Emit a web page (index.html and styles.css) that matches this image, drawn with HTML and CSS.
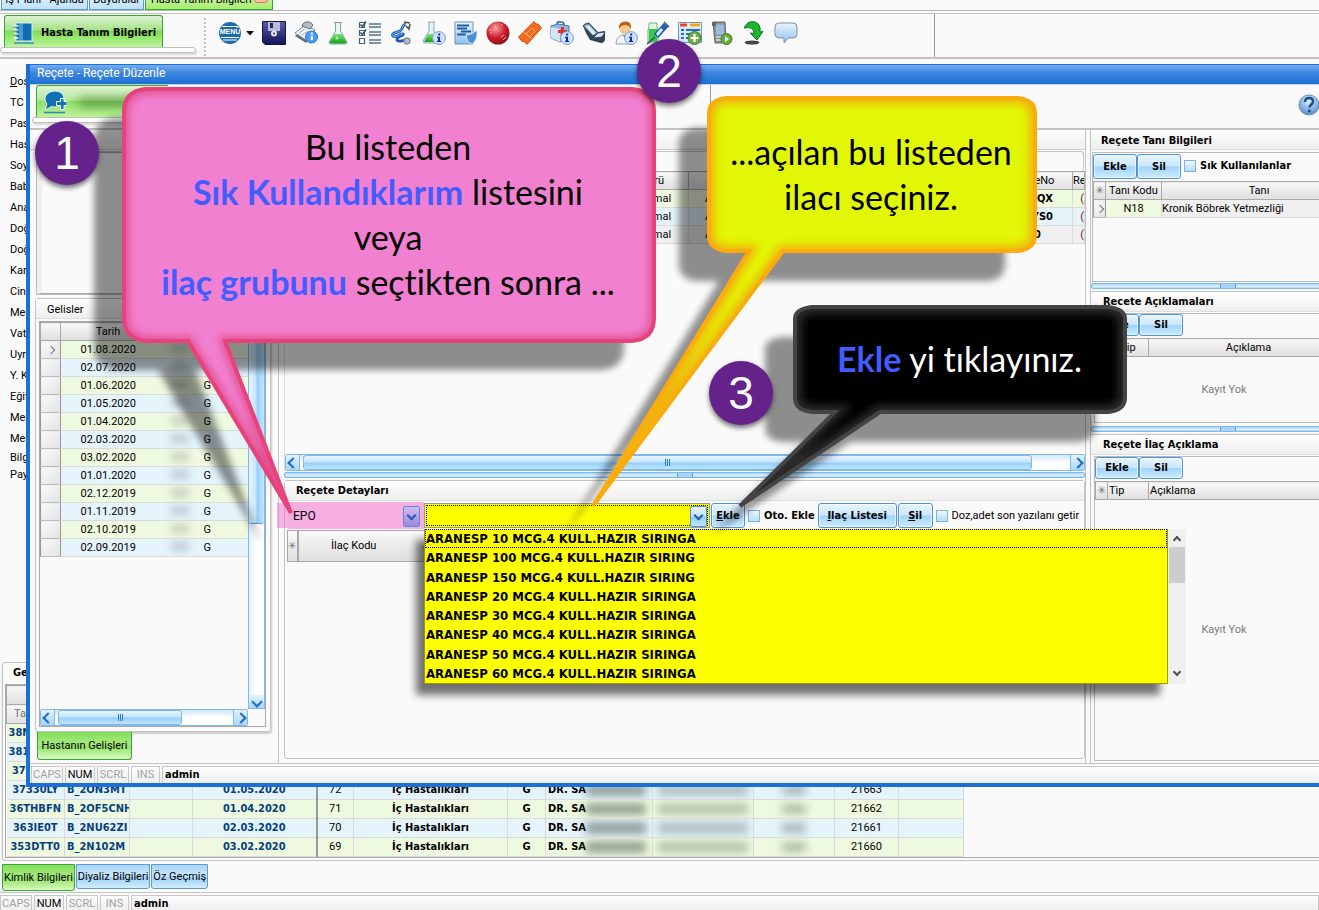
FILE: index.html
```html
<!DOCTYPE html>
<html lang="tr">
<head>
<meta charset="utf-8">
<title>Reçete Düzenle</title>
<link rel="stylesheet" href="styles.css">
</head>
<body>
<svg width="0" height="0" class="defs" aria-hidden="true">
  <defs>
    <linearGradient id="gBlue" x1="0" y1="0" x2="0" y2="1"><stop offset="0" stop-color="#eaf4fd"/><stop offset="1" stop-color="#8fc0ec"/></linearGradient>
    <linearGradient id="gGreen" x1="0" y1="0" x2="0" y2="1"><stop offset="0" stop-color="#7be07b"/><stop offset="1" stop-color="#18a018"/></linearGradient>
    <linearGradient id="gNavy" x1="0" y1="0" x2="0" y2="1"><stop offset="0" stop-color="#5a5aa8"/><stop offset="1" stop-color="#14145a"/></linearGradient>
    <radialGradient id="gRed" cx=".4" cy=".3" r=".8"><stop offset="0" stop-color="#f9a0a0"/><stop offset=".5" stop-color="#d02030"/><stop offset="1" stop-color="#7d0812"/></radialGradient>
    <radialGradient id="gHelp" cx=".5" cy=".3" r=".8"><stop offset="0" stop-color="#dcecfa"/><stop offset="1" stop-color="#3f83c6"/></radialGradient>
    <symbol id="info" viewBox="0 0 14 14"><circle cx="7" cy="7" r="6.4" fill="#cfe4fa" stroke="#7d9cc4"/><path d="M5 5.8h3v4h1v1.2H5V9.800h1V7H5zM6.200 2.500h2v2h-2z" fill="#1226c8"/></symbol>
  </defs>
</svg>

<div class="app">
  <nav class="top-tabs">
    <button class="ttab">İş Planı - Ajanda</button>
    <button class="ttab ttab-mid">Duyurular</button>
    <button class="ttab ttab-on">Hasta Tanım Bilgileri<i></i></button>
  </nav>

  <header class="toolbar">
    <div class="shelf-wrap">
      <button class="page-tab"><svg width="22" height="22" viewBox="0 0 22 22"><path d="M1 21h20" stroke="#3a8fc0" stroke-width="1.500"/><rect x="3" y="1" width="16" height="18" fill="#0e6fae" stroke="#d9eef8"/><path d="M7 1v18M9 1v18" stroke="#8cc8ea"/><path d="M0.500 4h5M0.500 8h5M0.500 12h5M0.500 16h5" stroke="#fff" stroke-width="1.600"/><path d="M0.500 5h4M0.500 9h4M0.500 13h4" stroke="#155f94" stroke-width=".8"/></svg>Hasta Tanım Bilgileri</button>
      <div class="shelf"></div>
    </div>
    <div class="dots"></div>
    <div class="icons">
      <button class="ico menu-ico" aria-label="Menü"><svg width="24" height="24" viewBox="0 0 24 24"><circle cx="12" cy="12" r="11" fill="#1d6cab"/><path d="M4 5.500h16M3 16.500h18M5 19h14" stroke="#fff" stroke-width="1.200"/><text x="12" y="13" text-anchor="middle" class="menu-txt">MENÜ</text></svg></button>
      <button class="ico caret" aria-label="Aç"><svg width="8" height="5" viewBox="0 0 8 5"><path d="M0 0h8L4 4.500z" fill="#111"/></svg></button>
      <button class="ico" aria-label="Kaydet"><svg width="24" height="24" viewBox="0 0 24 24"><path d="M.5.5h23v23H3L.5 21z" fill="url(#gNavy)" stroke="#15154e"/><path d="M6 1h12v9H6z" fill="#b9bcd8"/><path d="M8 2h3v5H8z" fill="#26265e"/><circle cx="12" cy="12.500" r="3" fill="#e8e8f4"/><circle cx="12" cy="12.500" r="1" fill="#30306a"/></svg></button>
      <button class="ico" aria-label="Kayıt bilgisi"><svg width="24" height="24" viewBox="0 0 24 24"><path d="M1 15 11 6l10 5-9 11z" fill="#5f6f80"/><path d="M1 12 11 4l10 5-9 10z" fill="#f4f6f9" stroke="#7b8794"/><path d="M9 3c2-3 8-3 10 1l-3 4-8-3z" fill="#b4bcc4" stroke="#616b76"/><path d="M5 12l6-4M8 14l6-4" stroke="#9aa6b2"/><circle cx="17.500" cy="16" r="6" fill="#4b9df0" stroke="#2a6fc4"/><path d="M16.800 14.500h2v4.500h-2zM16.800 11.500h2v2h-2z" fill="#fff"/></svg></button>
      <button class="ico" aria-label="Laboratuvar"><svg width="24" height="24" viewBox="0 0 24 24"><path d="M8 1.500h8M9.500 2v8L3 21.500q0 1.500 2 1.500h14q2 0 2-1.500L14.500 10V2" fill="#e9f5f5" stroke="#7da3a3"/><path d="M8 13h8l4.500 8.500q-.5 1-2 1h-13q-1.500 0-2-1z" fill="url(#gGreen)"/><circle cx="11" cy="17" r="1.500" fill="#a8f5a0"/></svg></button>
      <button class="ico" aria-label="Liste"><svg width="24" height="24" viewBox="0 0 24 24"><path d="M1.500 1.500h5v5h-5zM1.500 9.500h5v5h-5zM1.500 17.500h5v5h-5z" fill="#fff" stroke="#43657f" stroke-width="1.200"/><path d="M2.500 3.500l2 2 3.500-5M2.500 11.500l2 2 3.500-5" fill="none" stroke="#2c4d68" stroke-width="1.500"/><path d="M11 3h12M11 6h12M11 11h12M11 14h12M11 19h12M11 22h12" stroke="#55748c" stroke-width="1.300"/></svg></button>
      <button class="ico" aria-label="Muayene"><svg width="24" height="24" viewBox="0 0 24 24"><path d="M16 3c-5 1-2 5-6 7S1 12 3 15s8-3 10-2-7 3-6 6 7-1 11 1" fill="none" stroke="#1857b4" stroke-width="2.800"/><path d="M16 3c-5 1-2 5-6 7S1 12 3 15s8-3 10-2" fill="none" stroke="#7dbaf5"/><path d="M14 1l6 1M16 5l3 3 1-5" fill="none" stroke="#555" stroke-width="1.700"/><circle cx="17" cy="20" r="3.200" fill="#b8bcc2" stroke="#6d7379"/></svg></button>
      <button class="ico" aria-label="Laboratuvar bilgisi"><svg width="24" height="24" viewBox="0 0 24 24"><path d="M6 1h7M7 1v9L1 20q0 2 2 2h13q2 0 1-2L12 10V1" fill="#e4f2f6" stroke="#86a9b4"/><path d="M6 13h7l4 8H2z" fill="url(#gGreen)"/><use href="#info" x="10" y="10" width="14" height="14"/></svg></button>
      <button class="ico" aria-label="Rapor"><svg width="24" height="24" viewBox="0 0 24 24"><path d="M1 1h18v22H1z" fill="url(#gBlue)" stroke="#6d93b8"/><path d="M3 4.500h12M3 7.500h10M7 10.500h10M3 13.500h9" stroke="#1d5ca6" stroke-width="1.800"/><path d="M12 14q6 0 11-5 1 10-5 14-5-1-6-9z" fill="#4b90cf" stroke="#dcebf8"/></svg></button>
      <button class="ico" aria-label="Kan"><svg width="24" height="24" viewBox="0 0 24 24"><circle cx="12" cy="12" r="11.500" fill="url(#gRed)"/><path d="M3 9h3M4 12h2M15 3l2 2M15 16l3-2M17 19l3-3M9 4l1 3" stroke="#f2b6b6"/></svg></button>
      <button class="ico" aria-label="Bilet"><svg width="24" height="24" viewBox="0 0 24 24"><path d="M16 .5l2 2.500 2 0 3.500 4L9 23.500l-3-3-2 0L.5 16z" fill="#f26a1f" stroke="#d94c0c"/><path d="M6 11l8 7M8 13l6-6 3 3-6 6z" fill="none" stroke="#ffb070"/></svg></button>
      <button class="ico" aria-label="İlk yardım"><svg width="24" height="24" viewBox="0 0 24 24"><path d="M1 5l7-2 11 2v12l-9 4-9-4z" fill="#8fb6de" stroke="#4676ab"/><path d="M1 6l9 2v13l-9-4z" fill="#d2e3f4"/><path d="M7 3q0-3 4-2 3 0 3 3" fill="none" stroke="#315f95" stroke-width="1.500"/><path d="M8 9h3V6h3v3h3v3h-3v3h-3v-3H8z" fill="#e02c2c"/><use href="#info" x="10" y="10" width="14" height="14"/></svg></button>
      <button class="ico" aria-label="Yatak"><svg width="24" height="24" viewBox="0 0 24 24"><path d="M1 5q2-3 6-3l9 9 7-1v9q-1 3-4 3L8 19l-4-7z" fill="#2e4257"/><path d="M1 5q2-3 6-3l9 10-5 3z" fill="#7690a8" stroke="#3a5068"/><path d="M3 5l4-1 7 8-3 2z" fill="#dbe7f2"/><path d="M11 17l5-5 7-1-3 5z" fill="#dbe7f2" stroke="#3a5068"/></svg></button>
      <button class="ico" aria-label="Doktor"><svg width="24" height="24" viewBox="0 0 24 24"><path d="M2 23q0-9 9-9t9 9z" fill="#f2f6fb" stroke="#8ca3bd"/><circle cx="11" cy="8" r="5.500" fill="#f6c791"/><path d="M5 8Q4 1 11 .5T17 8q-2-4-6-4T5 8z" fill="#b86412"/><path d="M9 14l2 4 2-4" fill="#5aa1e6"/><use href="#info" x="10" y="10" width="14" height="14"/></svg></button>
      <button class="ico" aria-label="Aşı"><svg width="24" height="24" viewBox="0 0 24 24"><path d="M3 2h8v4l1 3v13H2V9l1-3z" fill="#dff6df" stroke="#6fae7c"/><path d="M3 8h8v13H3z" fill="#35c94c"/><path d="M10 15L20 4" stroke="#225fb4" stroke-width="6"/><path d="M11 14l5-6" stroke="#d6e8fa" stroke-width="3"/><path d="M18 1l5 5M9 16l-8 7" stroke="#2f4a6e" stroke-width="1.300"/></svg></button>
      <button class="ico" aria-label="Tablo ekle"><svg width="24" height="24" viewBox="0 0 24 24"><path d="M.5 1.500h23v20H.5z" fill="#d8e9fa" stroke="#6c93bf"/><path d="M1 2h22v4H1z" fill="#f4f4f4"/><path d="M2 4h7" stroke="#e8471c" stroke-width="3"/><path d="M12 4h10" stroke="#f3a41d" stroke-width="3"/><path d="M3 9h3M3 13h3M3 17h3M8 9h14M8 13h14M8 17h8" stroke="#226ec4" stroke-width="2"/><circle cx="16.500" cy="17" r="6.500" fill="#6fae42" stroke="#3f7a22"/><path d="M16.500 13v8M12.500 17h8" stroke="#fff" stroke-width="2.200"/></svg></button>
      <button class="ico" aria-label="Mobil"><svg width="24" height="24" viewBox="0 0 24 24"><path d="M3 1l12 0 1 21H5z" fill="#8b9199" stroke="#62676e"/><path d="M2 1h4v4H2z" fill="#62676e"/><path d="M6 3.500h8v10H6z" fill="#9dbce0"/><path d="M6 16h8M6 19h8" stroke="#d8dce0" stroke-width="1.500"/><circle cx="16.500" cy="18" r="5.500" fill="#63b03a" stroke="#3d7d20"/><path d="M15 15v6l4-3z" fill="#fff"/></svg></button>
      <button class="ico" aria-label="Yenile"><svg width="24" height="24" viewBox="0 0 24 24"><ellipse cx="10" cy="21.500" rx="7.500" ry="2" fill="#444"/><path d="M2 7Q6-1 13 1q6 2 5 10l3-.5-6 8.500-7-7 4 .5Q12 5 2 7z" fill="#1cb52c" stroke="#0c7a18"/></svg></button>
      <button class="ico" aria-label="Mesaj"><svg width="24" height="24" viewBox="0 0 24 24"><path d="M5 2h14q4 0 4 4v7q0 4-4 4h-5l-4 5v-5H5q-4 0-4-4V6q0-4 4-4z" fill="url(#gBlue)" stroke="#7793ae"/></svg></button>
    </div>
  </header>

  <main class="back">
    <ul class="fields">
      <li><u>D</u>os</li><li>TC</li><li>Pas</li><li>Has</li><li>Soy</li><li>Bab</li><li>Ana</li><li>Doğ</li><li>Doğ</li><li>Kar</li><li>Cin</li><li>Med</li><li>Vat</li><li>Uyr</li><li>Y. K</li><li>Eğit</li><li>Mes</li><li>Mes</li><li>Bilg</li><li>Pay</li>
    </ul>
    <section class="visits">
      <h2>Ge</h2>
      <div class="visits-box">
      <table class="grid back-grid">
        <colgroup><col class="w59"><col class="w65"><col class="w63"><col class="w124"><col class="w37"><col class="w154"><col class="w38"><col class="w107"><col class="w101"><col class="w81"><col class="w64"><col class="w65"></colgroup>
        <thead><tr><th colspan="12"></th></tr><tr><th>Ta</th><th></th><th></th><th></th><th></th><th></th><th></th><th></th><th></th><th></th><th></th><th></th></tr></thead>
        <tbody>
        <tr class="under"><td>38N</td><td></td><td></td><td></td><td></td><td></td><td></td><td></td><td></td><td></td><td></td><td></td></tr>
        <tr class="under"><td>381</td><td></td><td></td><td></td><td></td><td></td><td></td><td></td><td></td><td></td><td></td><td></td></tr>
        <tr class="under"><td>&nbsp;37</td><td></td><td></td><td></td><td></td><td></td><td></td><td></td><td></td><td></td><td></td><td></td></tr>
        <tr><td>37330LY</td><td>B_2ON3MT</td><td></td><td>01.05.2020</td><td>72</td><td>İç Hastalıkları</td><td>G</td><td>DR. SA<i class="smear"></i></td><td><i class="smear soft"></i></td><td><i class="smear tiny"></i></td><td>21663</td><td></td></tr>
        <tr><td>36THBFN</td><td>B_2OF5CNH</td><td></td><td>01.04.2020</td><td>71</td><td>İç Hastalıkları</td><td>G</td><td>DR. SA<i class="smear"></i></td><td><i class="smear soft"></i></td><td><i class="smear tiny"></i></td><td>21662</td><td></td></tr>
        <tr><td>363IE0T</td><td>B_2NU62ZI</td><td></td><td>02.03.2020</td><td>70</td><td>İç Hastalıkları</td><td>G</td><td>DR. SA<i class="smear"></i></td><td><i class="smear soft"></i></td><td><i class="smear tiny"></i></td><td>21661</td><td></td></tr>
        <tr><td>353DTT0</td><td>B_2N102M</td><td></td><td>03.02.2020</td><td>69</td><td>İç Hastalıkları</td><td>G</td><td>DR. SA<i class="smear"></i></td><td><i class="smear soft"></i></td><td><i class="smear tiny"></i></td><td>21660</td><td></td></tr>
        </tbody>
      </table>
      </div>
    </section>
  </main>

  <nav class="bottom-tabs">
    <button class="btab btab-on">Kimlik Bilgileri</button><button class="btab">Diyaliz Bilgileri</button><button class="btab">Öz Geçmiş</button>
  </nav>
  <footer class="status"><span>CAPS</span><span class="lit">NUM</span><span>SCRL</span><span>INS</span><b>admin</b></footer>

  <section class="window" role="dialog" aria-label="Reçete Düzenle">
    <h1 class="titlebar">Reçete - Reçete Düzenle</h1>
    <div class="win-body">
      <header class="win-tools">
        <div class="win-shelf">
          <button class="win-tab" aria-label="Reçete"><svg width="24" height="24" viewBox="0 0 24 24"><path d="M1 22.500h21" stroke="#2b86bb" stroke-width="1.500"/><path d="M12 1c6 0 9 4 9 8s-3 8-9 8c-1 0-2 0-3-.5L2 20l2-6C-1 8 4 1 12 1z" fill="#0e72b5" stroke="#e6f4fb"/><path d="M13.500 11.500h4v-3h3.500v3h3v4h-3v4h-3.500v-4h-4z" fill="#0e72b5" stroke="#fff"/></svg><i></i></button>
          <div class="shelf"></div>
        </div>
        <div class="tool-end"></div>
        <button class="help" aria-label="Yardım"><svg width="22" height="22" viewBox="0 0 22 22"><circle cx="11" cy="11" r="10" fill="url(#gHelp)" stroke="#6b8cb0"/><path d="M7 8q0-4 4-4t4 3.500c0 3-3.500 3-3.500 6" fill="none" stroke="#1e4a90" stroke-width="2.400"/><circle cx="11.300" cy="17" r="1.500" fill="#1e4a90"/></svg></button>
      </header>

      <div class="columns">
        <div class="col-left">
          <div class="band"></div>
          <div class="photo"></div>
          <section class="arrivals">
            <h2>Gelisler</h2>
            <div class="arr-box">
              <div class="arr-main">
                <table class="grid arr-grid">
                  <colgroup><col class="w20"><col class="w95"><col class="w48"><col></colgroup>
                  <thead><tr><th></th><th>Tarih</th><th></th><th></th></tr></thead>
                  <tbody>
                  <tr><th class="cur"></th><td>01.08.2020</td><td><i class="dab"></i></td><td></td></tr>
                  <tr><th></th><td>02.07.2020</td><td><i class="dab"></i></td><td></td></tr>
                  <tr><th></th><td>01.06.2020</td><td><i class="dab"></i></td><td>G</td></tr>
                  <tr><th></th><td>01.05.2020</td><td><i class="dab"></i></td><td>G</td></tr>
                  <tr><th></th><td>01.04.2020</td><td><i class="dab"></i></td><td>G</td></tr>
                  <tr><th></th><td>02.03.2020</td><td><i class="dab"></i></td><td>G</td></tr>
                  <tr><th></th><td>03.02.2020</td><td><i class="dab"></i></td><td>G</td></tr>
                  <tr><th></th><td>01.01.2020</td><td><i class="dab"></i></td><td>G</td></tr>
                  <tr><th></th><td>02.12.2019</td><td><i class="dab"></i></td><td>G</td></tr>
                  <tr><th></th><td>01.11.2019</td><td><i class="dab"></i></td><td>G</td></tr>
                  <tr><th></th><td>02.10.2019</td><td><i class="dab"></i></td><td>G</td></tr>
                  <tr><th></th><td>02.09.2019</td><td><i class="dab"></i></td><td>G</td></tr>
                  </tbody>
                </table>
                <div class="hbar"><button class="sb left" aria-label="Sola"></button><div class="track"><div class="thumb short"></div></div><button class="sb right" aria-label="Sağa"></button></div>
              </div>
              <div class="vbar"><div class="vtrack"><div class="vthumb"></div></div><button class="sb down" aria-label="Aşağı"></button></div>
            </div>
          </section>
          <button class="left-tab">Hastanın Gelişleri</button>
        </div>

        <div class="col-mid">
          <section class="rx-list">
            <div class="band"></div>
            <div class="search"></div>
            <table class="grid rx-grid">
              <colgroup><col class="w332"><col class="w71"><col><col class="w84"><col class="w12"></colgroup>
              <thead><tr><th></th><th>Türü</th><th></th><th>ReçeteNo</th><th>Re</th></tr></thead>
              <tbody>
              <tr><td></td><td>Normal</td><td>A</td><td>DQX</td><td>(</td></tr>
              <tr><td></td><td>Normal</td><td>A</td><td>YS0</td><td>(</td></tr>
              <tr><td></td><td>Normal</td><td>A</td><td>0</td><td>(</td></tr>
              </tbody>
            </table>
            <div class="hbar push"><button class="sb left" aria-label="Sola"></button><div class="track"><div class="thumb wide"></div></div><button class="sb right" aria-label="Sağa"></button></div>
          </section>
          <div class="splitter"></div>
          <section class="rx-detail">
            <h2>Reçete Detayları</h2>
            <div class="entry">
              <div class="combo group"><select aria-label="İlaç grubu"><option>EPO</option></select></div>
              <div class="combo drug"><select aria-label="İlaç"><option></option></select></div>
              <button class="btn"><u>E</u>kle</button>
              <label class="chk strong"><input type="checkbox">Oto. Ekle</label>
              <button class="btn wide"><u>I</u>laç Listesi</button>
              <button class="btn"><u>S</u>il</button>
              <label class="chk"><input type="checkbox">Doz,adet son yazılanı getir</label>
              <div class="options">
                <ul role="listbox" aria-label="İlaçlar">
                  <li class="focus">ARANESP 10 MCG.4 KULL.HAZIR SIRINGA</li>
                  <li>ARANESP 100 MCG.4 KULL.HAZIR SIRING</li>
                  <li>ARANESP 150 MCG.4 KULL.HAZIR SIRING</li>
                  <li>ARANESP 20 MCG.4 KULL.HAZIR SIRINGA</li>
                  <li>ARANESP 30 MCG.4 KULL.HAZIR SIRINGA</li>
                  <li>ARANESP 40 MCG.4 KULL.HAZIR SIRINGA</li>
                  <li>ARANESP 50 MCG.4 KULL.HAZIR SIRINGA</li>
                  <li>ARANESP 60 MCG.4 KULL.HAZIR SIRINGA</li>
                </ul>
                <div class="opt-bar"><i class="up"></i><b></b><i class="dn"></i></div>
              </div>
            </div>
            <div class="drug-head"><span class="star">✳</span><span class="code">İlaç Kodu<em>⁄</em></span></div>
          </section>
        </div>

        <div class="col-right">
          <section class="side diag">
            <h2>Reçete Tanı Bilgileri</h2>
            <div class="side-body">
              <div class="row"><button class="btn">Ekle</button><button class="btn">Sil</button><label class="chk strong"><input type="checkbox">Sık Kullanılanlar</label></div>
              <table class="grid diag-grid">
                <colgroup><col class="w12"><col class="w56"><col></colgroup>
                <thead><tr><th>✳</th><th>Tanı Kodu</th><th>Tanı</th></tr></thead>
                <tbody><tr><th class="cur"></th><td>N18</td><td>Kronik Böbrek Yetmezliği</td></tr></tbody>
              </table>
            </div>
          </section>
          <div class="splitter"></div>
          <section class="side notes">
            <h2>Recete Açıklamaları</h2>
            <div class="side-body">
              <div class="row"><button class="btn">Ekle</button><button class="btn">Sil</button></div>
              <table class="grid"><colgroup><col class="w12"><col class="w41"><col></colgroup><thead><tr><th>✳</th><th>Tip</th><th>Açıklama</th></tr></thead></table>
              <p class="empty">Kayıt Yok</p>
            </div>
          </section>
          <div class="splitter"></div>
          <section class="side drugs">
            <h2>Reçete İlaç Açıklama</h2>
            <div class="side-body">
              <div class="row"><button class="btn">Ekle</button><button class="btn">Sil</button></div>
              <table class="grid lead"><colgroup><col class="w12"><col class="w41"><col></colgroup><thead><tr><th>✳</th><th>Tip</th><th>Açıklama</th></tr></thead></table>
              <p class="empty">Kayıt Yok</p>
            </div>
          </section>
        </div>
      </div>
      <footer class="status"><span>CAPS</span><span class="lit">NUM</span><span>SCRL</span><span>INS</span><b>admin</b></footer>
    </div>
  </section>

  <svg class="callouts" width="1319" height="910" viewBox="0 0 1319 910" aria-hidden="true">
    <defs>
      <filter id="soft" x="-20%" y="-20%" width="140%" height="140%"><feGaussianBlur stdDeviation="3.500"/></filter>
      <filter id="glow" x="-20%" y="-20%" width="140%" height="140%"><feGaussianBlur stdDeviation="4"/></filter>
      <path id="pk" d="M146 89H632Q654 91 654 111V318Q654 339 632 341H225L291 513L188 341H146Q124 339 124 318V111Q124 91 146 89Z"/>
      <path id="yl" d="M726 98H1018Q1035 100 1035 113V235Q1035 249 1018 251H783L593 506L749 251H726Q709 249 709 235V113Q709 100 726 98Z"/>
      <path id="bk" d="M812 307H1108Q1125 309 1125 319V398Q1125 410 1108 412H880L740 506L835 412H812Q795 410 795 398V319Q795 309 812 307Z"/>
      <clipPath id="cpk"><use href="#pk"/></clipPath>
      <clipPath id="cyl"><use href="#yl"/></clipPath>
      <clipPath id="cbk"><use href="#bk"/></clipPath>
    </defs>
    <g fill="#000" opacity=".43" filter="url(#soft)"><use href="#pk" x="-30" y="29"/></g>
    <g fill="#000" opacity=".43" filter="url(#soft)"><use href="#yl" x="-30" y="30"/></g>
    <g fill="#000" opacity=".43" filter="url(#soft)"><use href="#bk" x="-30" y="30"/></g>
    <use href="#pk" fill="#f280d0"/>
    <g clip-path="url(#cpk)"><use href="#pk" fill="none" stroke="#e2508f" stroke-width="10" filter="url(#glow)"/></g>
    <use href="#pk" fill="none" stroke="#e8427b" stroke-width="4"/>
    <use href="#yl" fill="#e2f705"/>
    <g clip-path="url(#cyl)"><use href="#yl" fill="none" stroke="#f0b40a" stroke-width="12" filter="url(#glow)"/></g>
    <use href="#yl" fill="none" stroke="#fbab0b" stroke-width="4"/>
    <use href="#bk" fill="#000"/>
    <g clip-path="url(#cbk)"><use href="#bk" fill="none" stroke="#2c2c2c" stroke-width="14" filter="url(#glow)"/></g>
    <use href="#bk" fill="none" stroke="#444" stroke-width="4"/>
  </svg>
  <div class="note note-pink">Bu listeden<br><b>Sık Kullandıklarım</b> listesini<br>veya<br><b>ilaç grubunu</b> seçtikten sonra ...</div>
  <div class="note note-yellow">...açılan bu listeden<br>ilacı seçiniz.</div>
  <div class="note note-black"><b>Ekle</b> yi tıklayınız.</div>
  <div class="step s1">1</div>
  <div class="step s2">2</div>
  <div class="step s3">3</div>
</div>
</body>
</html>
```
FILE: styles.css
```css
:root {
  --ui: Roboto, "Noto Sans", sans-serif;
  --uib: "DejaVu Sans Condensed", "DejaVu Sans", sans-serif;
  --line: #c3c3c3;
  --bg: #fafafa;
}
* { box-sizing: border-box; }
body { margin: 0; overflow: hidden; font: 11px/14px var(--ui); color: #000; background: var(--bg); }
h1, h2, ul, p { margin: 0; padding: 0; font-weight: normal; }
ul { list-style: none; }
button { font: inherit; color: inherit; padding: 0; margin: 0; background: none; border: 0; white-space: nowrap; }
svg { display: block; flex: none; }
.defs { position: absolute; }
b, .strong { font-family: var(--uib); font-weight: bold; }

.app { position: relative; display: flex; flex-direction: column; height: 100vh; overflow: hidden; }

/* document tabs */
.top-tabs { display: flex; align-items: flex-end; gap: 1px; height: 11px; padding-left: 1px; flex: none; border-bottom: 1px solid #b5b5b5; overflow: hidden; }
.ttab { display: flex; flex: none; align-items: center; justify-content: center; width: 87px; height: 20px; border: 1px solid #5b9bd8; background: linear-gradient(#e6f4ff, #bfe1fb); line-height: 14px; }
.ttab-mid { width: 55px; }
.ttab-on { justify-content: space-between; width: 128px; padding: 0 4px 0 5px; border-color: #37a737; background: linear-gradient(#d9f5bf, #a6ee6d); }
.ttab-on i { flex: none; align-self: flex-start; width: 14px; height: 12px; border: 1px solid #e2705a; border-radius: 3px; background: #ffc0a4; }

/* main toolbar */
.toolbar { display: flex; flex: none; height: 46px; margin-top: 2px; border-top: 1px solid var(--line); border-bottom: 2px solid var(--line); }
.shelf-wrap { width: 196px; padding-top: 1px; }
.page-tab { display: flex; align-items: center; gap: 6px; width: 159px; height: 32px; margin-left: 4px; padding: 2px 0 0 8px; border: 1px solid #37a737; border-bottom: 0; border-radius: 3px 3px 0 0; background: linear-gradient(#def3d4, #a5e388 45%, #7fdc55 50%, #bdf598); font: bold 11px/14px var(--uib); }
.shelf { height: 6px; border: 1px solid #c0c0c0; border-radius: 3px; background: #fff; box-shadow: 1px 2px 2px #d8d8d8; }
.dots { width: 2px; margin: 4px 11px 1px 8px; background: repeating-linear-gradient(#bbb 0 2px, transparent 2px 4px); }
.icons { display: flex; align-items: flex-start; gap: 8px; width: 718px; padding: 7px 0 0 1px; border-right: 1px solid #999; }
.ico { flex: none; width: 24px; height: 24px; }
.menu-ico { margin-right: -4px; }
.caret { width: 8px; height: 24px; }
.menu-txt { font: bold 7px "Liberation Sans", sans-serif; fill: #fff; }

/* patient form behind the window */
.back { display: flex; flex: 1; flex-direction: column; justify-content: space-between; min-height: 0; overflow: hidden; }
.fields { padding: 12px 0 0 10px; }
.fields li { height: 21px; line-height: 21px; }
.fields li:nth-last-child(-n+2) { height: 17px; line-height: 17px; }
.visits { flex: none; margin: 0 -6px 0 2px; padding: 0 2px 2px; border: 1px solid var(--line); border-radius: 3px; box-shadow: 0 2px 2px #ccc; }
.visits h2 { height: 21px; padding-left: 8px; font: bold 11px/20px var(--uib); }
.visits-box { height: 174px; overflow: hidden; border: 1px solid #aaa; border-right: 0; }

.grid { table-layout: fixed; width: 100%; border-collapse: collapse; }
.grid td, .grid th { height: 18px; padding: 0; overflow: hidden; white-space: nowrap; text-align: center; font-weight: normal; line-height: 14px; }
.grid th { border: 1px solid #a9a9a9; background: linear-gradient(#f8f8f8, #dfdfdf); }
.grid tbody th { background: linear-gradient(135deg, #fafafa, #e2e2e2); border-color: #bbb #999; }
.grid td { border-right: 1px solid #dadada; border-bottom: 1px solid #dadada; }
.grid tbody tr:nth-child(odd) td { background: #eefadf; }
.grid tbody tr:nth-child(even) td { background: #e5f4fb; }
.cur::before { content: ""; display: block; width: 5px; height: 5px; margin: auto; border: solid #777; border-width: 1px 1px 0 0; transform: rotate(45deg); }

.back-grid { width: 958px; }
.back-grid td, .back-grid th { height: 19px; }
.back-grid td:nth-child(-n+4), .back-grid td:nth-child(6), .back-grid td:nth-child(7), .back-grid td:nth-child(8) { font: bold 11px/14px var(--uib); }
.back-grid td:nth-child(-n+4) { color: #06407c; }
.back-grid td:nth-child(2), .back-grid td:nth-child(8) { text-align: left; padding-left: 2px; }
.back-grid td:nth-child(4) { border-right: 2px solid #999; }
.back-grid .under td:first-child { text-align: left; padding-left: 2px; }
.back-grid tr:nth-child(2) th:first-child { text-align: left; padding-left: 7px; }
.w12 { width: 12px; } .w20 { width: 20px; } .w37 { width: 37px; } .w38 { width: 38px; } .w41 { width: 41px; } .w48 { width: 48px; } .w56 { width: 56px; }
.w59 { width: 58px; } .w63 { width: 63px; } .w64 { width: 64px; } .w65 { width: 65px; } .w71 { width: 71px; } .w81 { width: 81px; } .w84 { width: 84px; }
.w95 { width: 95px; } .w101 { width: 101px; } .w107 { width: 107px; } .w124 { width: 124px; } .w154 { width: 154px; } .w332 { width: 332px; }
.smear { display: inline-block; width: 60px; height: 12px; vertical-align: middle; background: #3c4a40; opacity: .5; filter: blur(4px); }
.smear.soft { width: 90px; opacity: .3; }
.smear.tiny { width: 24px; height: 10px; opacity: .35; }

.bottom-tabs { display: flex; gap: 1px; flex: none; height: 29px; margin-top: 3px; padding-left: 2px; border-bottom: 1px solid var(--line); }
.btab { height: 25px; padding: 0 1px; border: 1px solid #5b9bd8; border-radius: 0 0 3px 3px; background: linear-gradient(#a9d6f8, #cde8fc 50%, #9cd0f8 55%, #d5eefd); }
.btab-on { height: 27px; border-color: #37a737; background: linear-gradient(#84de5a, #a8ec80 48%, #8ee263 52%, #d9f9c0); }
.status { display: flex; gap: 2px; flex: none; height: 18px; padding-left: 1px; background: linear-gradient(#fdfdfd, #efefef); }
.status > * { padding-top: 1px; border: 1px solid #c8c8c8; border-bottom: 0; text-align: center; }
.status span { width: 32px; color: #a0a0a0; }
.status span:nth-child(4) { width: 29px; }
.status .lit { width: 30px; color: #000; }
.status b { flex: 1; padding-left: 2px; text-align: left; }
.app > .status { margin-top: 2px; height: 15px; padding: 0; }

/* prescription window */
.window { position: absolute; left: 26px; top: 64px; right: -50px; bottom: 123px; display: flex; flex-direction: column; border: solid #1b6fd6; border-width: 1px 4px 4px; background: var(--bg); }
.titlebar { height: 19px; padding-left: 7px; color: #fff; background: linear-gradient(#74aef0, #3d87de 40%, #1d6fd6); font: 12px/17px var(--ui); }
.win-body { display: flex; flex: 1; flex-direction: column; min-height: 0; border-top: 1px solid #ccc; }
.win-tools { display: flex; flex: none; height: 45px; border-bottom: 2px solid var(--line); }
.win-shelf { width: 650px; padding-left: 2px; }
.win-shelf .shelf { width: 190px; }
.win-tab { display: flex; width: 132px; height: 32px; margin-left: 4px; padding: 4px 0 0 6px; overflow: hidden; border-left: 1px solid #37a737; border-top: 1px solid #37a737; border-radius: 3px 0 0; background: linear-gradient(#def3d4, #b5e89c 45%, #8fdf68 50%, #bdf598); }
.win-tab i { width: 100px; height: 9px; margin: 8px 0 0 12px; background: #2c5a1c; opacity: .5; filter: blur(5px); }
.tool-end { width: 31px; border-right: 1px solid #999; }
.help { margin: 9px 45px 0 auto; height: 22px; }
.columns { display: grid; grid-template-columns: 249px minmax(0, 1fr) 275px; column-gap: 4px; flex: 1; min-height: 0; border-bottom: 1px solid var(--line); margin-bottom: 2px; }
.columns h2 { flex: none; height: 20px; padding-left: 10px; font-size: 11px; line-height: 21px; border-bottom: 1px solid #ddd; background: linear-gradient(#fff, #eee); }
.band { flex: none; height: 20px; border-bottom: 1px solid #ccc; background: linear-gradient(#fff, #eee); }

.col-left { display: flex; flex-direction: column; min-height: 0; border-right: 1px solid var(--line); }
.photo { height: 142px; margin: 2px 6px 4px 7px; flex: none; border: 1px solid #aaa; border-left: 5px solid #eee; outline: 1px solid #bbb; }
.arrivals { display: flex; flex: 1; flex-direction: column; min-height: 0; margin: 0 7px 0 5px; padding: 0 4px 4px 3px; border: 1px solid var(--line); border-radius: 3px; box-shadow: 1px 2px 2px #ccc; }
.arrivals h2 { margin: 0 -3px 2px; padding-left: 11px; }
.arr-box { display: flex; flex: 1; min-height: 0; border: 1px solid #aaa; }
.arr-main { display: flex; flex: 1; flex-direction: column; min-width: 0; }
.arr-grid td { border-right: 0; padding-top: 1px; }
.arr-grid td:last-child { text-align: left; }
.dab { display: inline-block; width: 18px; height: 9px; background: #667; opacity: .3; filter: blur(4px); }
.left-tab { align-self: flex-start; flex: none; width: 95px; height: 28px; margin: 0 0 3px 7px; border: 1px solid #37a737; border-top: 0; border-radius: 0 0 3px 3px; background: linear-gradient(#84de5a, #a8ec80 48%, #8ee263 52%, #d9f9c0); }

.hbar { display: flex; flex: none; height: 17px; margin-top: auto; border: 1px solid #7eb9ea; border-radius: 2px; background: linear-gradient(#cfe7fb, #fff 50%); }
.sb { position: relative; width: 13px; background: linear-gradient(#e4f3fe, #a9d6fa); }
.sb::before { content: ""; display: block; width: 6px; height: 6px; margin: auto; border: solid #1d6dc8; border-width: 0 0 2px 2px; transform: rotate(45deg); }
.sb.right::before { transform: rotate(225deg); }
.sb.down::before { transform: rotate(-45deg); }
.track { flex: 1; padding: 0 0 0 3px; border: solid #7eb9ea; border-width: 0 1px; }
.thumb { height: 15px; border: 1px solid #7eb9ea; border-radius: 3px; background: linear-gradient(90deg, #2b7bd0 1px, transparent 1px 2px, #2b7bd0 2px 3px, transparent 3px 4px, #2b7bd0 4px 5px, transparent 5px) center / 5px 7px no-repeat, linear-gradient(#e8f5fe, #c5e4fc 48%, #93cffb 52%, #bfe5fd); }
.thumb.short { width: 71%; }
.thumb.wide { width: 95%; }
.vbar { display: flex; flex-direction: column; width: 17px; margin-bottom: 17px; border: 1px solid #7eb9ea; }
.vtrack { flex: 1; background: linear-gradient(90deg, #e3f2fd, #fff 50%); }
.vthumb { height: 54%; border-bottom: 1px solid #5b9fe0; border-radius: 3px; background: linear-gradient(90deg, #e8f5fe, #c5e4fc 48%, #93cffb 52%, #bfe5fd); }
.sb.down { width: 15px; height: 13px; }

.col-mid { display: flex; flex-direction: column; min-height: 0; min-width: 0; padding-left: 1px; border-right: 1px solid var(--line); }
.rx-list { display: flex; flex: none; flex-direction: column; height: 341px; border: solid #ddd; border-width: 0 0 0 1px; }
.search { height: 20px; margin: 1px 1px 0; border: 1px solid var(--line); border-bottom: 0; border-radius: 3px; }
.rx-grid td { padding-top: 1px; }
.rx-grid td:nth-child(3) { text-align: left; padding-left: 16px; }
.rx-grid td:nth-child(4) { text-align: right; padding-right: 19px; font: bold 11px/14px var(--uib); }
.rx-grid tr:nth-child(3) td:nth-child(4) { padding-right: 31px; }
.rx-grid td:nth-child(5) { text-align: right; color: #702020; }
.rx-grid tbody tr:nth-child(3) td { background: #efefef; }
.splitter { flex: none; height: 6px; margin: 1px 0 2px; border: 1px solid #7eb9ea; border-radius: 2px; background: linear-gradient(90deg, #5b9fe0 1px, #a8d5f8 1px 15px, #5b9fe0 15px) center / 16px 100% no-repeat, linear-gradient(#a8d5f8, #dff0fd 60%, #a8d5f8); }
.rx-detail { display: flex; flex: 1; flex-direction: column; border: 1px solid var(--line); border-radius: 3px; margin-bottom: 4px; }
.columns .rx-detail h2, .columns .side h2 { font-family: var(--uib); font-weight: bold; }
.columns .rx-detail h2 { padding-left: 11px; line-height: 19px; }
.entry { position: relative; display: flex; align-items: center; height: 29px; padding-left: 4px; }
.combo { position: relative; flex: none; height: 25px; }
.combo select { display: block; appearance: none; width: 100%; height: 100%; padding: 0 3px; border: 1px solid #999; border-radius: 0; background: var(--bg); font: 12px/16px var(--ui); }
.combo::before { content: ""; position: absolute; right: 3px; top: 3px; width: 15px; height: 19px; border: 1px solid #4f93dc; border-radius: 2px; background: linear-gradient(#e8f5fe, #c5e4fc 48%, #93cffb 52%, #bfe5fd); pointer-events: none; }
.combo::after { content: ""; position: absolute; right: 8px; top: 9px; width: 5px; height: 5px; border: solid #1d5cb8; border-width: 0 2px 2px 0; transform: rotate(45deg); pointer-events: none; }
.group { width: 134px; margin-right: 1px; outline: 2px solid #f6aee0; outline-offset: -1px; box-shadow: -12px 0 0 rgba(240, 110, 200, .5); }
.group select { background: #f6aee0; }
.group::before { background: linear-gradient(#d8b8ec, #9c88dc); }
.drug { width: 286px; margin-right: 1px; background: #ff0; }
.drug select { background: #ff0; outline: 1px dotted #000; outline-offset: -3px; }
.btn { height: 25px; border: 1px solid #4f93dc; border-radius: 3px; background: linear-gradient(#e8f5fe, #cbe6fc 48%, #9fd4fb 52%, #cdebfe); box-shadow: inset 0 0 0 1px rgba(255, 255, 255, .6); font: bold 11px/14px var(--uib); }
.entry .btn { flex: none; width: 34px; }
.entry .btn.wide { width: 79px; }
.entry .btn.wide + .btn { width: 35px; margin-left: 1px; }
.chk { display: flex; flex: none; align-items: center; white-space: nowrap; margin: 0 3px 0 3px; gap: 4px; }
.chk input { appearance: none; width: 12px; height: 12px; margin: 0; border: 1px solid #7eb4e6; background: linear-gradient(#f0f9ff, #b5dcfa); }
.options { position: absolute; z-index: 2; left: 139px; top: 28px; display: flex; width: 762px; height: 155px; background: #f0f0f0; }
.options ul { display: grid; grid-auto-rows: 1fr; flex: 1; background: #ff0; border: 1px solid #999a00; border-top: 0; box-shadow: -8px 11px 8px rgba(0, 0, 0, .55); font: bold 13px/20px var(--uib); }
.options li { min-height: 0; padding-left: 1px; line-height: 19px; }
.options .focus { outline: 1px dotted #000; outline-offset: -1px; }
.opt-bar { display: flex; flex-direction: column; width: 18px; padding: 8px 1px 9px; align-items: center; z-index: 1; }
.opt-bar b { width: 16px; height: 36px; margin-top: 4px; background: #cdcdcd; }
.opt-bar i { width: 6px; height: 6px; border: solid #505050; border-width: 2px 0 0 2px; transform: rotate(45deg); }
.opt-bar .dn { margin-top: auto; transform: rotate(225deg); }
.drug-head { display: flex; width: 340px; height: 32px; margin: 0 0 0 2px; border: 1px solid #a9a9a9; background: linear-gradient(#f8f8f8, #dfdfdf); line-height: 30px; }
.star { width: 11px; border-right: 2px solid #a9a9a9; font-size: 10px; color: #777; }
.code { position: relative; width: 136px; padding-left: 32px; }
.code em { position: absolute; right: 8px; color: #4f83c0; }

.col-right { display: flex; flex-direction: column; min-width: 0; border-left: 1px solid var(--line); }
.side { display: flex; flex: none; flex-direction: column; }
.columns .side h2 { padding-left: 10px; line-height: 22px; }
.columns .notes h2, .columns .drugs h2 { padding-left: 12px; line-height: 20px; }
.side-body { display: flex; flex: 1; flex-direction: column; min-height: 0; margin: 2px 8px 0 1px; border: solid #bbb; border-width: 1px 0 1px 1px; }
.row { display: flex; flex: none; height: 24px; }
.row .btn { width: 44px; height: 22px; }
.diag .row { height: 28px; padding-top: 1px; align-items: flex-start; }
.diag .row .btn { height: 25px; }
.diag .row .chk { height: 24px; }
.diag { height: 152px; }
.diag-grid td { padding-top: 1px; }
.diag-grid td:last-child { text-align: left; background: #f0f0f0 !important; }
.grid thead th:first-child { color: #777; }
.notes { height: 134px; border-top: 1px solid var(--line); }
.notes .side-body, .drugs .side-body { margin: 1px 16px 2px 3px; }
.drugs { flex: 1; border-top: 1px solid var(--line); }
.lead th:nth-child(n+2) { text-align: left; padding-left: 1px; }
.empty { margin: auto; padding-left: 4px; color: #777; }
.window .status { height: 17px; }

/* training annotations laid over the screen */
.callouts { position: absolute; left: 0; top: 0; z-index: 5; pointer-events: none; }
.note { position: absolute; z-index: 6; text-align: center; white-space: nowrap; font: 34px/45px Lato, "Open Sans", sans-serif; font-variant-ligatures: none; }
.note b { font-family: inherit; color: #415cff; }
.note-pink { left: 122px; top: 124px; width: 532px; }
.note-yellow { left: 708px; top: 129px; width: 326px; }
.note-black { left: 794px; top: 336px; width: 331px; color: #fff; }
.step { position: absolute; z-index: 7; width: 64px; height: 64px; border-radius: 50%; background: #64228a; color: #fff; text-align: center; font: 46px/64px "Liberation Sans", Arial, sans-serif; box-shadow: 0 3px 5px rgba(0, 0, 0, .55); }
.s1 { left: 35px; top: 121px; }
.s2 { left: 637px; top: 39px; }
.s3 { left: 709px; top: 361px; }
```
